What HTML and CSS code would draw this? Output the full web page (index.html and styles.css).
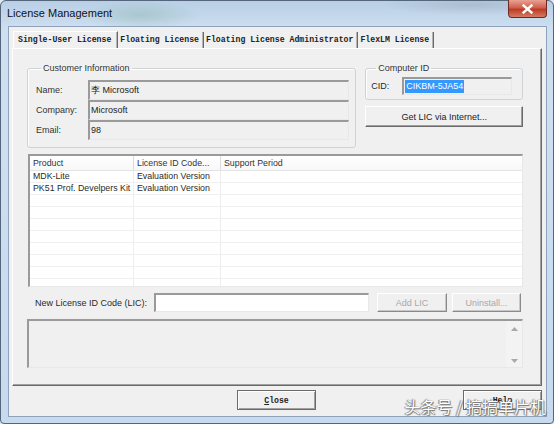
FILE: index.html
```html
<!DOCTYPE html>
<html lang="en">

<head>
  <meta charset="UTF-8" />
  <meta name="viewport" content="width=device-width, initial-scale=1.0" />
  <title>License Management</title>
  <link rel="stylesheet" href="styles.css">
</head>

<body>
  <div class="window">
    <div class="titleBar">
      <span class="title">License Management</span>
      <span class="closeBtn">
        <svg width="11" height="10" viewBox="0 0 11 10">
          <path d="M1.5 1.5 L9.5 8.5 M9.5 1.5 L1.5 8.5" stroke="#fff" stroke-width="2.4" stroke-linecap="square" />
        </svg>
      </span>
    </div>

    <div class="client">
      <div class="tabs">
        <span class="tab active">Single-User License</span>
        <span class="tab">Floating License</span>
        <span class="tab">Floating License Administrator</span>
        <span class="tab">FlexLM License</span>
      </div>

      <div class="panel">
        <div class="topRow">
          <fieldset class="group customer">
            <legend>Customer Information</legend>
            <div class="field">
              <label>Name:</label>
              <div class="readBox">李 Microsoft</div>
            </div>
            <div class="field">
              <label>Company:</label>
              <div class="readBox">Microsoft</div>
            </div>
            <div class="field">
              <label>Email:</label>
              <div class="readBox">98</div>
            </div>
          </fieldset>

          <div class="rightCol">
            <fieldset class="group computer">
              <legend>Computer ID</legend>
              <div class="cidRow">
                <label>CID:</label>
                <div class="cidBox"><span class="selected">CIKBM-5JA54</span></div>
              </div>
            </fieldset>
            <div class="btn getLic">Get LIC via Internet...</div>
          </div>
        </div>

        <div class="listView">
          <div class="listHead">
            <span class="colProduct">Product</span>
            <span class="colCode">License ID Code...</span>
            <span class="colPeriod">Support Period</span>
          </div>
          <div class="listRow">
            <span class="colProduct">MDK-Lite</span>
            <span class="colCode">Evaluation Version</span>
            <span class="colPeriod"></span>
          </div>
          <div class="listRow">
            <span class="colProduct">PK51 Prof. Develpers Kit</span>
            <span class="colCode">Evaluation Version</span>
            <span class="colPeriod"></span>
          </div>
          <div class="listRow"><span class="colProduct"></span><span class="colCode"></span><span class="colPeriod"></span></div>
          <div class="listRow"><span class="colProduct"></span><span class="colCode"></span><span class="colPeriod"></span></div>
          <div class="listRow"><span class="colProduct"></span><span class="colCode"></span><span class="colPeriod"></span></div>
          <div class="listRow"><span class="colProduct"></span><span class="colCode"></span><span class="colPeriod"></span></div>
          <div class="listRow"><span class="colProduct"></span><span class="colCode"></span><span class="colPeriod"></span></div>
          <div class="listRow"><span class="colProduct"></span><span class="colCode"></span><span class="colPeriod"></span></div>
          <div class="listRow"><span class="colProduct"></span><span class="colCode"></span><span class="colPeriod"></span></div>
          <div class="listRow"><span class="colProduct"></span><span class="colCode"></span><span class="colPeriod"></span></div>
        </div>

        <div class="licRow">
          <label>New License ID Code (LIC):</label>
          <div class="licInput"></div>
          <div class="btn disabled addLic">Add LIC</div>
          <div class="btn disabled uninstall">Uninstall...</div>
        </div>

        <div class="memo">
          <div class="memoScroll">
            <svg width="7" height="4" viewBox="0 0 7 4"><path d="M0 4 L3.5 0 L7 4 Z" fill="#a8a8a8" /></svg>
            <svg width="7" height="4" viewBox="0 0 7 4"><path d="M0 0 L3.5 4 L7 0 Z" fill="#a8a8a8" /></svg>
          </div>
        </div>
      </div>

      <div class="footer">
        <div class="btn monoBtn closeDlg"><u>C</u>lose</div>
        <div class="btn monoBtn helpDlg">Help</div>
      </div>
      <span class="watermark">头条号 / 搞搞单片机</span>
    </div>
  </div>
</body>

</html>
```

FILE: styles.css
```css
* {
  padding: 0;
  margin: 0;
  box-sizing: border-box;
}

body {
  width: 554px;
  height: 424px;
  overflow: hidden;
  background: #dfe9f4;
  font-family: "Liberation Sans", Arial, sans-serif;
  font-size: 9px;
  color: #2a2a2a;
}

.window {
  height: 424px;
  display: flex;
  flex-direction: column;
  border: 1px solid #55657a;
  border-radius: 6px 6px 4px 4px;
  background:
    radial-gradient(ellipse 60px 14px at 140px 14px, rgba(120, 170, 150, 0.35), transparent),
    radial-gradient(ellipse 90px 10px at 470px 4px, rgba(150, 160, 175, 0.4), transparent),
    linear-gradient(#b9cfe6, #cfe0f1 30px, #c7daee);
}

/* title bar */
.titleBar {
  height: 25px;
  display: flex;
  align-items: flex-start;
  padding-left: 6px;
}

.title {
  line-height: 25px;
  font-size: 11px;
  color: #111;
}

.closeBtn {
  margin-left: auto;
  margin-right: 6px;
  margin-top: -1px;
  width: 39px;
  height: 18px;
  display: flex;
  align-items: center;
  justify-content: center;
  border: 1px solid #6d2a22;
  border-top: none;
  border-radius: 0 0 4px 4px;
  background: linear-gradient(#e8a293, #d0604d 45%, #bd3b26 55%, #d87a62);
}

/* client area */
.client {
  position: relative;
  height: 391px;
  margin: 0 6px 0 7px;
  padding: 5px 4px 0 3px;
  background: #f0f0f0;
  border: 1px solid #8ea3bb;
}

.tabs {
  display: flex;
  height: 16px;
  margin-left: 1px;
}

.tab {
  font-family: "Liberation Mono", "Courier New", monospace;
  font-weight: bold;
  font-size: 8.2px;
  line-height: 16px;
  color: #222;
  padding: 0 4px 0 2px;
  border-right: 1px solid #6a6a6a;
  box-shadow: inset -1px 0 #b4b4b4;
}

.tab.active {
  padding: 1px 6px 0 4px;
  border-left: 1px solid #fff;
  border-top: 1px solid #fff;
  line-height: 14px;
  height: 17px;
  margin-top: -1px;
}

.panel {
  height: 338px;
  padding: 14px 18px 0 14px;
  border-top: 1px solid #fff;
  border-left: 1px solid #fff;
  border-right: 1px solid #6a6a6a;
  border-bottom: 1px solid #6a6a6a;
  box-shadow: inset -1px -1px #a0a0a0;
}

.topRow {
  display: flex;
  gap: 9px;
}

.group {
  border: 1px solid #cfd3d6;
  border-radius: 3px;
  box-shadow: inset 1px 1px #fff;
}

.group legend {
  margin-left: 5px;
  padding: 0 2px;
  line-height: 11px;
  color: #333;
}

.customer {
  width: 330px;
  height: 85px;
  padding: 6px 6px 0 8px;
}

.field {
  display: flex;
  align-items: center;
  height: 20px;
}

.field label {
  width: 52px;
  color: #333;
}

.readBox,
.cidBox,
.licInput,
.listView,
.memo {
  border-style: solid;
  border-width: 2px 1px 1px 2px;
  border-color: #9a9a9a #e8e8e8 #e8e8e8 #9a9a9a;
}

.readBox {
  width: 261px;
  height: 20px;
  line-height: 16px;
  padding-left: 1px;
  background: #f0f0f0;
  color: #222;
}

.rightCol {
  width: 158px;
  display: flex;
  flex-direction: column;
}

.computer {
  height: 37px;
  padding: 3px 6px 0 5px;
}

.cidRow {
  display: flex;
  align-items: center;
}

.cidRow label {
  width: 31px;
}

.cidBox {
  width: 110px;
  height: 18px;
  padding: 1px 0 0 1px;
  background: #f0f0f0;
}

.selected {
  display: inline-block;
  line-height: 13px;
  padding: 0 1px;
  background: #3399ff;
  color: #fff;
}

.btn {
  display: flex;
  align-items: center;
  justify-content: center;
  background: #f0f0f0;
  border: 1px solid;
  border-color: #fff #6a6a6a #6a6a6a #fff;
  box-shadow: inset -1px -1px #a0a0a0;
  color: #222;
}

.getLic {
  margin-top: 6px;
  height: 21px;
}

/* list view */
.listView {
  margin: 6px 0 0 1px;
  width: 495px;
  height: 133px;
  overflow: hidden;
  background: #fff;
  font-size: 8.8px;
}

.listHead,
.listRow {
  display: flex;
}

.listHead {
  height: 15px;
  line-height: 14px;
  border-bottom: 1px solid #e3e3e3;
  background: linear-gradient(#fff, #f7f8f9);
}

.listRow {
  height: 12px;
  line-height: 11px;
  border-bottom: 1px solid #f0f0f0;
}

.colProduct,
.colCode,
.colPeriod {
  padding-left: 3px;
  white-space: nowrap;
  overflow: hidden;
  border-right: 1px solid #ededed;
}

.listHead span {
  border-right-color: #dcdcdc;
  color: #333;
}

.colProduct {
  width: 104px;
}

.colCode {
  width: 87px;
}

.colPeriod {
  flex: 1;
  border-right: none;
}

/* new license row */
.licRow {
  display: flex;
  align-items: center;
  margin-top: 6px;
  height: 19px;
}

.licRow label {
  width: 119px;
  margin-left: 8px;
}

.licInput {
  width: 215px;
  height: 19px;
  background: #fff;
}

.disabled {
  height: 19px;
  color: #a8a8a8;
  border-color: #fff #8a8a8a #8a8a8a #fff;
  box-shadow: inset -1px -1px #c8c8c8;
}

.addLic {
  width: 70px;
  margin-left: 8px;
}

.uninstall {
  width: 69px;
  margin-left: 5px;
}

.memo {
  margin-top: 7px;
  width: 496px;
  height: 49px;
  display: flex;
  justify-content: flex-end;
  background: #f0f0f0;
}

.memoScroll {
  width: 16px;
  display: flex;
  flex-direction: column;
  justify-content: space-between;
  align-items: center;
  padding: 6px 0 4px;
  background: #f3f3f3;
}

/* footer buttons */
.footer {
  display: flex;
  padding: 4px 0 0 225px;
  gap: 147px;
}

.monoBtn {
  width: 79px;
  height: 20px;
  font-family: "Liberation Mono", "Courier New", monospace;
  font-weight: bold;
  font-size: 8.2px;
  border: 1px solid #6a6a6a;
  box-shadow: inset 1px 1px #fff, inset -1px -1px #a0a0a0;
}

.watermark {
  position: absolute;
  right: 0;
  bottom: -2px;
  font-family: "Noto Sans CJK SC", sans-serif;
  font-size: 16px;
  color: #fff;
  text-shadow: 0 0 1px #555, 1px 1px 1px #777, -1px 0 1px #888;
  white-space: nowrap;
}
```
